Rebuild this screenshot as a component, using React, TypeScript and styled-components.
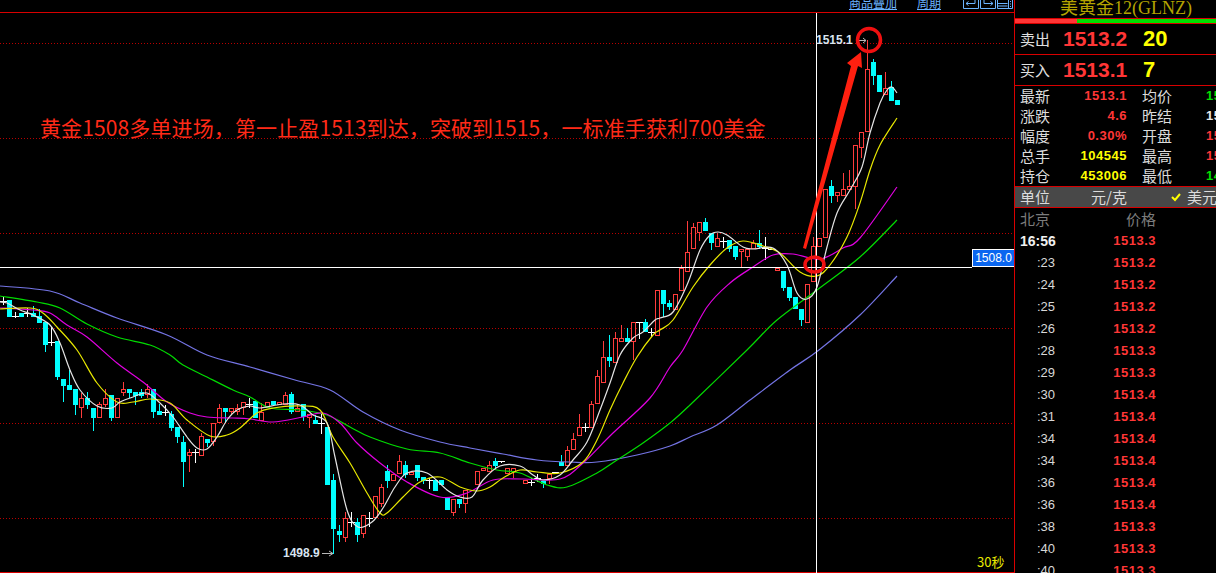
import styled, { createGlobalStyle } from "styled-components";

const GlobalStyle = createGlobalStyle`
  html, body {
    margin: 0;
    padding: 0;
    background: #000;
    overflow: hidden;
  }
`;

const cjk = `"Noto Sans CJK SC", sans-serif`;

const RED_LINE = "#d80000";
const QUOTE_RED = "#ff3636";
const CANDLE_RED = "#ff3c3c";

const Page = styled.div`
  display: flex;
  width: 1216px;
  height: 573px;
  background: #000;
  overflow: hidden;
`;

const ChartPane = styled.div`
  position: relative;
  display: flex;
  flex-direction: column;
  width: 1014px;
  height: 573px;
  flex-shrink: 0;
  border-right: 1px solid ${RED_LINE};
  box-sizing: content-box;
`;

const TopBar = styled.div`
  display: flex;
  justify-content: flex-end;
  align-items: flex-end;
  height: 12px;
  flex-shrink: 0;
  overflow: hidden;
  border-bottom: 1px solid ${RED_LINE};
  padding-right: 1px;
`;

const TopLink = styled.span<{ $gap: number }>`
  font: 12px/12px ${cjk};
  color: #6cb4ff;
  text-decoration: underline;
  margin-right: ${(p) => p.$gap}px;
  position: relative;
  top: -3px;
`;

const ToolIcon = styled.svg`
  display: block;
  width: 16px;
  height: 9px;
  margin-left: 1px;
  margin-bottom: 3px;
`;

const ChartSvg = styled.svg`
  display: block;
  width: 1014px;
  height: 560px;
`;

const Annotation = styled.div`
  position: absolute;
  left: 40px;
  top: 112px;
  font: 21px/30px ${cjk};
  letter-spacing: 0.12px;
  color: #ff2a18;
  white-space: nowrap;
`;

const ExtremeLabel = styled.span<{ $left: number; $top: number }>`
  position: absolute;
  left: ${(p) => p.$left}px;
  top: ${(p) => p.$top}px;
  font: bold 12px/14px "Liberation Sans", sans-serif;
  color: #d8e4f0;
`;

const PriceTag = styled.div`
  position: absolute;
  left: 972px;
  top: 249px;
  width: 42px;
  height: 18px;
  box-sizing: border-box;
  border: 1px solid #fff;
  border-right: none;
  background: #0a66f0;
  color: #fff;
  font: 12px/16px "Liberation Sans", sans-serif;
  text-align: center;
`;

const PeriodLabel = styled.span`
  position: absolute;
  left: 977px;
  top: 554px;
  font: 13px/16px ${cjk};
  color: #e8e800;
`;

const SidePanel = styled.aside`
  flex: 1;
  display: flex;
  flex-direction: column;
  min-width: 0;
  height: 573px;
  overflow: hidden;
`;

const Title = styled.div`
  height: 18px;
  flex-shrink: 0;
  overflow: hidden;
  padding-left: 45px;
  font: 18px/16px "Liberation Serif", ${cjk};
  color: #b4a400;
  white-space: nowrap;
  border-bottom: 1px solid ${RED_LINE};
`;

const RatioBar = styled.div`
  display: flex;
  height: 4px;
  flex-shrink: 0;
  background: #00e000;
  border-bottom: 1px solid ${RED_LINE};
`;

const RatioFill = styled.div`
  width: 62px;
  background: ${QUOTE_RED};
`;

const QuoteRow = styled.div`
  display: grid;
  grid-template-columns: 43px 80px 1fr;
  align-items: center;
  height: 30px;
  flex-shrink: 0;
  padding-left: 5px;
  border-bottom: 1px solid ${RED_LINE};
`;

const QuoteLabel = styled.span`
  font: 15px/20px ${cjk};
  color: #e0e0e0;
`;

const QuotePrice = styled.span`
  font: bold 21px/24px "Liberation Sans", sans-serif;
  color: ${QUOTE_RED};
`;

const QuoteSize = styled.span`
  font: bold 22px/24px "Liberation Sans", sans-serif;
  color: #ffff00;
`;

const StatsBlock = styled.div`
  display: flex;
  flex-direction: column;
  flex-shrink: 0;
  height: 100px;
  border-bottom: 1px solid ${RED_LINE};
`;

const StatRow = styled.div`
  display: grid;
  grid-template-columns: 44px 63px 79px 1fr;
  align-items: center;
  height: 20px;
  padding-left: 5px;
`;

const StatLabel = styled.span<{ $second?: boolean }>`
  font: 15px/20px ${cjk};
  color: #dcdcdc;
  padding-left: ${(p) => (p.$second ? "15px" : "0")};
`;

const StatValue = styled.span<{ $color: string; $left?: boolean }>`
  font: bold 13px/20px "Liberation Sans", sans-serif;
  letter-spacing: 0.5px;
  color: ${(p) => p.$color};
  text-align: ${(p) => (p.$left ? "left" : "right")};
  white-space: nowrap;
  overflow: hidden;
`;

const UnitRow = styled.div`
  display: grid;
  grid-template-columns: 44px 63px 60px 1fr;
  align-items: center;
  height: 20px;
  flex-shrink: 0;
  padding-left: 5px;
  background: #484848;
  border-bottom: 1px solid ${RED_LINE};
`;

const UnitLabel = styled.span<{ $right?: boolean }>`
  font: 15px/20px ${cjk};
  color: #dcdcdc;
  text-align: ${(p) => (p.$right ? "right" : "left")};
  white-space: nowrap;
`;

const CheckMark = styled.svg`
  justify-self: end;
  width: 10px;
  height: 10px;
  margin-right: 6px;
`;

const TickHead = styled.div`
  display: flex;
  justify-content: space-between;
  width: 136px;
  height: 22px;
  flex-shrink: 0;
  padding-left: 5px;
  font: 15px/22px ${cjk};
  color: #7c7c7c;
`;

const TickRow = styled.div`
  display: grid;
  grid-template-columns: 1fr 60px;
  align-items: center;
  width: 136px;
  height: 22px;
  flex-shrink: 0;
  padding-left: 5px;
`;

const TickTime = styled.span<{ $full: boolean }>`
  font: ${(p) => (p.$full ? "bold 14px" : "13px")}/22px "Liberation Sans", sans-serif;
  color: ${(p) => (p.$full ? "#f0f0f0" : "#d8d8d8")};
  padding-left: ${(p) => (p.$full ? "0" : "17px")};
`;

const TickPrice = styled.span`
  font: bold 13px/22px "Liberation Sans", sans-serif;
  letter-spacing: 0.5px;
  color: ${QUOTE_RED};
  text-align: right;
`;

type Candle = { kind: "r" | "c" | "w"; top: number; bot: number; wickTop: number; wickBot: number; cross: number; x: number };
type Row = [Candle["kind"], number, number, number?, number?] | null;

// traced off 3x crops, so every y is origin + value / 3 and candles sit 6px apart
const trace = (startIndex: number, originY: number, rows: Row[]): Candle[] =>
  rows.flatMap((row, n) => {
    if (!row) return [];
    const [kind, a, b, c, d] = row;
    const y = (v: number) => Math.round(originY + v / 3);
    const x = 3 + 6 * (startIndex + n);
    if (kind === "w") {
      return [{ kind, x, top: y(a), bot: y(a), wickTop: y(a), wickBot: y(b), cross: y(c ?? a) }];
    }
    return [{ kind, x, top: y(a), bot: y(b), wickTop: y(c ?? a), wickBot: y(d ?? b), cross: 0 }];
  });

const candles: Candle[] = [
  ...trace(0, 280, [
    ["w", 50, 72, 62], ["c", 60, 110], ["w", 95, 110, 108], ["c", 98, 110], ["w", 85, 108, 98], ["c", 98, 110, 78], ["c", 108, 128, 88],
    ["c", 125, 195, 125, 215], ["w", 140, 195, 185], ["c", 183, 290, 183, 300], ["c", 297, 318, 297, 365], ["c", 315, 330, 270], ["c", 327, 375, 327, 405],
    ["r", 355, 385, 340, 413], ["c", 353, 375, 337, 387], ["c", 385, 413, 385, 452], ["r", 373, 413, 365], ["r", 355, 375, 328, 380], ["c", 345, 413, 345, 422],
    ["r", 355, 413], ["r", 328, 338, 307, 348], ["c", 327, 338, 327, 355], ["c", 337, 347, 337, 375], ["c", 337, 347, 327, 355], ["r", 328, 345, 313, 355],
    ["c", 327, 395, 327, 413], ["c", 393, 405, 373], ["w", 375, 405, 395], ["c", 403, 443, 393, 452], ["c", 441, 471, 441, 488], ["c", 486, 545, 468, 622],
    ["r", 517, 527, 508, 575], ["w", 508, 545, 515], ["r", 469, 527, 460], ["c", 477, 489, 477, 500], ["r", 430, 487, 430, 498], ["r", 385, 430, 372],
    ["c", 385, 395, 385, 430], ["r", 385, 395, 385, 405], ["r", 385, 395, 373, 405], ["r", 365, 385, 365, 405],
  ]),
  ...trace(41, 380, [
    ["w", 55, 80, 72], ["c", 63, 113], ["r", 95, 123, 70], ["r", 65, 85], ["c", 63, 75], ["r", 65, 75], ["r", 45, 75, 35], ["c", 43, 95, 35, 103],
    ["r", 85, 95, 72], ["c", 73, 110, 73, 122], ["r", 103, 113, 103, 143], ["c", 120, 132, 105], ["w", 100, 160, 130], ["c", 140, 315], ["c", 300, 447, 283, 522],
    ["c", 453, 465, 435, 487], ["r", 415, 473, 397, 485], ["w", 397, 437, 425], ["c", 427, 465, 415, 485], ["r", 405, 463, 405, 473], ["w", 397, 437, 415],
    ["r", 349, 415], ["r", 322, 373, 312, 380], ["c", 273, 303, 255, 323], ["r", 283, 303], ["r", 243, 283, 225], ["c", 255, 285, 243, 295], ["r", 275, 285],
    ["c", 255, 293, 255, 303], ["c", 291, 303, 291, 313], ["w", 295, 323, 300], ["c", 300, 333], ["c", 300, 315], ["c", 350, 390], ["r", 357, 398, 357, 408],
    ["c", 357, 373, 357, 383], ["r", 331, 371, 331, 398], null,
  ]),
  ...trace(79, 300, [
    ["r", 513, 555], ["r", 503, 513], ["r", 495, 515, 483], ["c", 483, 497, 475, 510], ["w", 484, 485, 484], ["r", 505, 523], ["r", 505, 515, 505, 535], null,
    ["r", 541, 553], ["w", 533, 555, 545], ["w", 523, 543, 533], ["c", 543, 553, 543, 563], ["r", 523, 538, 523, 553], ["w", 515, 516, 515], ["c", 485, 497, 465],
    ["r", 449, 497, 437], ["r", 417, 449, 400], ["r", 381, 409, 343], ["w", 370, 393, 381], ["r", 313, 383, 303], ["r", 229, 313, 210], ["r", 172, 248, 123],
    ["c", 171, 183, 105, 200], ["r", 115, 190, 97], ["r", 115, 125, 75], ["c", 113, 125, 83], ["r", 67, 125, 67, 180], ["w", 67, 115, 67], ["c", 67, 97, 57],
    ["w", 85, 107, 97], ["r", -30, 107],
  ]),
  ...trace(110, 170, [
    ["c", 360, 402, 360, 440], ["c", 400, 412, 390, 420], ["r", 373, 420], ["r", 295, 362, 285], ["r", 247, 305, 153], ["r", 172, 238, 160], ["r", 155, 190, 155, 212],
    ["c", 155, 182, 145], ["c", 190, 220, 190, 240], ["r", 203, 230, 190], ["w", 200, 230, 212], ["c", 210, 237, 210, 247], ["c", 227, 260, 227, 270],
    ["r", 238, 247, 238, 295], ["r", 237, 260, 237, 272], ["r", 220, 237, 210], ["c", 220, 232, 180, 238], ["w", 200, 268, 235], ["w", 237, 238, 237],
    ["r", 295, 304], ["c", 303, 353, 303, 363], ["c", 351, 383, 351, 393], ["c", 381, 418], ["c", 417, 450, 417, 468], ["r", 343, 458], ["r", 229, 335, 200],
    ["r", 203, 230], ["r", 57, 203], ["c", 47, 78, 30, 98], ["r", 67, 77, 67, 97], ["r", 57, 78, 10], ["r", 48, 60, 0], ["r", -75, 50, -75, 117],
  ]),
  ...trace(143, 0, [
    ["r", 397, 445, 397, 473], ["r", 208, 397, 120], ["c", 185, 228, 177, 255], ["c", 225, 275], ["r", 265, 285, 215], ["c", 262, 302, 243], ["c", 300, 315],
  ]),
];

// catmull-rom through the traced points, the averages are smooth curves
const smoothPath = (points: string) => {
  const pts = points.split(" ").map((p) => p.split(",").map(Number));
  let d = `M${pts[0][0]} ${pts[0][1]}`;
  for (let i = 0; i < pts.length - 1; i++) {
    const p0 = pts[Math.max(i - 1, 0)];
    const p1 = pts[i];
    const p2 = pts[i + 1];
    const p3 = pts[Math.min(i + 2, pts.length - 1)];
    const c1x = p1[0] + (p2[0] - p0[0]) / 6;
    const c1y = p1[1] + (p2[1] - p0[1]) / 6;
    const c2x = p2[0] - (p3[0] - p1[0]) / 6;
    const c2y = p2[1] - (p3[1] - p1[1]) / 6;
    d += `C${c1x.toFixed(1)} ${c1y.toFixed(1)} ${c2x.toFixed(1)} ${c2y.toFixed(1)} ${p2[0]} ${p2[1]}`;
  }
  return d;
};

const maLines: { color: string; points: string }[] = [
  {
    color: "#7474e4",
    points:
      "0,286 50,291 80,303 117,318 167,335 207,355 250,367 295,380 330,390 363,412 400,430 440,442 470,448 503,454 537,460 570,462 597,462 637,455 670,446 690,437 717,425 750,400 790,370 819,350 860,315 897,276",
  },
  {
    color: "#00dc00",
    points:
      "0,296 37,302 60,308 87,324 117,337 150,345 170,355 183,365 207,377 233,390 250,397 270,408 300,410 327,415 350,427 370,437 407,449 440,453 470,463 497,470 520,473 547,485 567,487 597,473 617,460 643,443 670,423 690,405 747,350 777,320 817,290 860,257 897,220",
  },
  {
    color: "#e000e0",
    points:
      "0,308 33,310 50,313 67,325 87,337 117,363 143,382 167,402 190,413 207,417 233,418 250,419 273,422 303,417 323,413 340,423 357,443 380,463 407,482 440,497 467,493 493,480 523,479 560,479 583,463 613,433 650,398 670,367 683,350 707,307 730,283 753,267 773,255 793,254 820,259 843,248 860,238 897,187",
  },
  {
    color: "#e8e800",
    points:
      "0,309 30,308 43,313 57,327 77,350 97,383 117,402 133,402 150,399 170,403 187,420 210,436 227,435 240,428 257,413 273,408 300,406 320,410 333,437 350,463 367,493 380,513 387,513 403,497 420,482 440,477 460,487 477,491 490,487 503,478 520,470 537,472 560,473 583,462 597,440 610,410 623,383 637,357 653,335 660,330 673,320 693,287 710,265 727,248 743,241 763,246 780,253 800,272 817,276 830,265 847,237 860,203 870,170 880,145 897,118",
  },
  {
    color: "#e4e4e4",
    points:
      "0,302 7,303 20,310 33,315 50,325 60,343 70,370 80,390 97,406 112,408 120,402 133,397 147,393 160,403 173,417 187,437 197,448 207,449 217,437 227,420 237,410 250,406 260,408 283,404 300,405 313,415 327,423 335,457 347,510 358,527 372,522 383,508 395,487 407,473 427,473 447,490 460,497 472,497 483,480 500,466 520,466 533,475 543,480 560,475 573,460 587,442 600,410 610,383 620,355 633,338 643,332 655,320 660,318 673,312 687,285 700,250 710,235 718,232 727,235 743,247 753,249 773,248 787,265 797,293 807,299 817,287 827,247 837,213 850,190 862,167 870,133 880,103 887,90 892,87 897,93",
  },
];

const gridLines = [43.5, 138.5, 233.5, 328.5, 423.5, 518.5];

const stats = [
  { a: "最新", av: "1513.1", ac: QUOTE_RED, b: "均价", bv: "15", bc: "#00e000" },
  { a: "涨跌", av: "4.6", ac: QUOTE_RED, b: "昨结", bv: "15", bc: "#e8e8e8" },
  { a: "幅度", av: "0.30%", ac: QUOTE_RED, b: "开盘", bv: "15", bc: QUOTE_RED },
  { a: "总手", av: "104545", ac: "#ffff00", b: "最高", bv: "15", bc: QUOTE_RED },
  { a: "持仓", av: "453006", ac: "#ffff00", b: "最低", bv: "14", bc: "#00e000" },
];

const ticks: [string, string][] = [
  ["16:56", "1513.3"], [":23", "1513.2"], [":24", "1513.2"], [":25", "1513.2"], [":26", "1513.2"], [":28", "1513.3"],
  [":29", "1513.3"], [":30", "1513.4"], [":31", "1513.4"], [":34", "1513.4"], [":34", "1513.4"], [":36", "1513.4"],
  [":36", "1513.4"], [":38", "1513.3"], [":40", "1513.3"], [":40", "1513.3"],
];

const CandleMark = ({ c }: { c: Candle }) => {
  const mid = c.x + 0.5;
  if (c.kind === "w") {
    return (
      <g stroke="#fff" shapeRendering="crispEdges">
        <line x1={mid} x2={mid} y1={c.wickTop} y2={c.wickBot + 1} />
        <line x1={c.x - 3} x2={c.x + 4} y1={c.cross + 0.5} y2={c.cross + 0.5} />
      </g>
    );
  }
  if (c.kind === "c") {
    return (
      <g shapeRendering="crispEdges">
        <line x1={mid} x2={mid} y1={c.wickTop} y2={c.wickBot} stroke="#00ffff" />
        <rect x={c.x - 2} y={c.top} width={5} height={c.bot - c.top} fill="#00ffff" />
      </g>
    );
  }
  return (
    <g stroke={CANDLE_RED} shapeRendering="crispEdges" fill="#000">
      <line x1={mid} x2={mid} y1={c.wickTop} y2={c.wickBot} />
      <rect x={c.x - 1.5} y={c.top + 0.5} width={4} height={Math.max(c.bot - c.top - 1, 1)} />
    </g>
  );
};

export default function App() {
  return (
    <Page>
      <GlobalStyle />
      <ChartPane>
        <TopBar>
          <TopLink $gap={20}>商品叠加</TopLink>
          <TopLink $gap={21}>周期</TopLink>
          <ToolIcon viewBox="0 0 16 9" fill="none" stroke="#6cb4ff">
            <path d="M.5 0v8.5h15V0M3 3.5h9V0M3 3.5l2.5-2M3 3.5l2.5 2" />
          </ToolIcon>
          <ToolIcon viewBox="0 0 16 9" fill="none" stroke="#6cb4ff">
            <path d="M.5 0v8.5h15V0M13 3.5H4V0M13 3.5l-2.5-2M13 3.5l-2.5 2" />
          </ToolIcon>
          <ToolIcon viewBox="0 0 16 9" fill="none" stroke="#6cb4ff">
            <path d="M.5 0v8.5h15V0M.5 3.5h10M.5 6h10M11.5 0v8.5M13 1.5h1M13 4h1M13 6.5h1" />
          </ToolIcon>
        </TopBar>
        <ChartSvg viewBox="0 13 1014 560">
          {gridLines.map((y) => (
            <line key={y} x1={0} x2={1014} y1={y} y2={y} stroke="#b80000" strokeDasharray="1 2" />
          ))}
          <line x1={0} x2={1014} y1={572.5} y2={572.5} stroke={RED_LINE} />
          {candles.map((c, i) => (
            <CandleMark key={i} c={c} />
          ))}
          {maLines.map((ma) => (
            <path key={ma.color} d={smoothPath(ma.points)} fill="none" stroke={ma.color} strokeWidth={1.2} />
          ))}
          <line x1={0} x2={972} y1={267.5} y2={267.5} stroke="#fff" shapeRendering="crispEdges" />
          <line x1={816.5} x2={816.5} y1={13} y2={573} stroke="#fff" shapeRendering="crispEdges" />
          <path d="M859 40.5h7M863 38l3 2.5-3 2.5" fill="none" stroke="#b8b8b8" />
          <path d="M322 553.5h11M329 551l4 2.5-4 2.5" fill="none" stroke="#b8b8b8" />
          <polygon points="803,248 806,249 858,66 862,68 861,52 847,63 851,66" fill="#ff2010" />
          <ellipse cx={869} cy={40} rx={11.5} ry={11.5} fill="none" stroke="#f01010" strokeWidth={3.5} />
          <ellipse cx={814.5} cy={264.5} rx={9.5} ry={7.5} fill="none" stroke="#f01010" strokeWidth={3.5} />
        </ChartSvg>
        <Annotation>黄金1508多单进场，第一止盈1513到达，突破到1515，一标准手获利700美金</Annotation>
        <ExtremeLabel $left={816} $top={33}>1515.1</ExtremeLabel>
        <ExtremeLabel $left={283} $top={546}>1498.9</ExtremeLabel>
        <PriceTag>1508.0</PriceTag>
        <PeriodLabel>30秒</PeriodLabel>
      </ChartPane>
      <SidePanel>
        <Title>美黄金12(GLNZ)</Title>
        <RatioBar>
          <RatioFill />
        </RatioBar>
        <QuoteRow>
          <QuoteLabel>卖出</QuoteLabel>
          <QuotePrice>1513.2</QuotePrice>
          <QuoteSize>20</QuoteSize>
        </QuoteRow>
        <QuoteRow>
          <QuoteLabel>买入</QuoteLabel>
          <QuotePrice>1513.1</QuotePrice>
          <QuoteSize>7</QuoteSize>
        </QuoteRow>
        <StatsBlock>
          {stats.map((s) => (
            <StatRow key={s.a}>
              <StatLabel>{s.a}</StatLabel>
              <StatValue $color={s.ac}>{s.av}</StatValue>
              <StatLabel $second>{s.b}</StatLabel>
              <StatValue $color={s.bc} $left>{s.bv}</StatValue>
            </StatRow>
          ))}
        </StatsBlock>
        <UnitRow>
          <UnitLabel>单位</UnitLabel>
          <UnitLabel $right>元/克</UnitLabel>
          <CheckMark viewBox="0 0 10 10" fill="none" stroke="#ffff00" strokeWidth={2}>
            <path d="M1 5l3 3 5-6" />
          </CheckMark>
          <UnitLabel>美元</UnitLabel>
        </UnitRow>
        <TickHead>
          <span>北京</span>
          <span>价格</span>
        </TickHead>
        {ticks.map(([time, price], i) => (
          <TickRow key={i}>
            <TickTime $full={i === 0}>{time}</TickTime>
            <TickPrice>{price}</TickPrice>
          </TickRow>
        ))}
      </SidePanel>
    </Page>
  );
}
